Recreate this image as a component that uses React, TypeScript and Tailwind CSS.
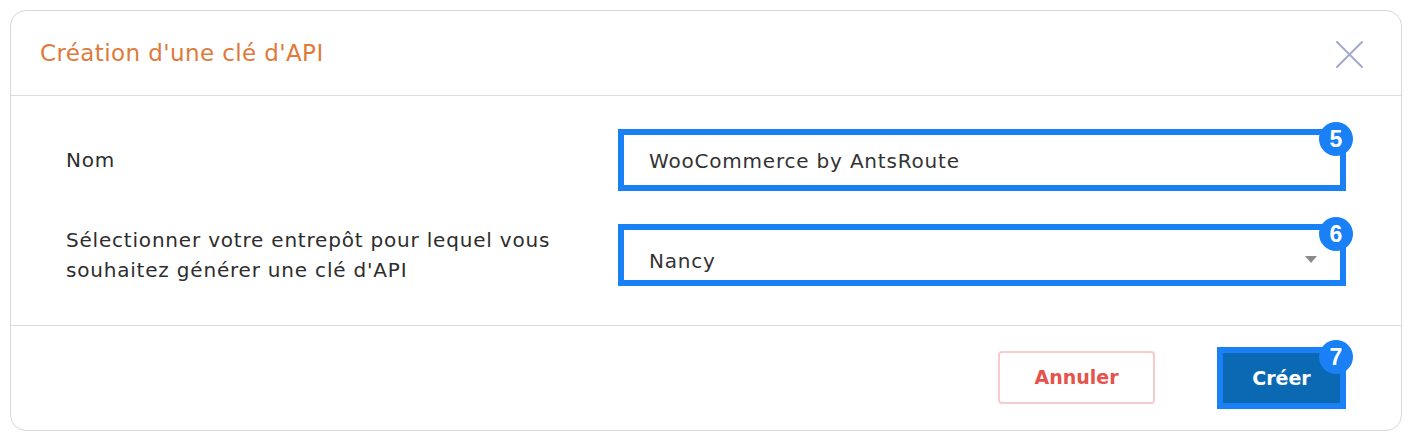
function Badge({ n }: { n: number }) {
  return (
    <span className="absolute -top-[13px] -right-[13px] flex size-[34px] items-center justify-center rounded-full bg-[#1a80f5] font-['Liberation_Sans',sans-serif] text-[23px] font-bold leading-none tracking-normal text-white">
      {n}
    </span>
  )
}

export default function App() {
  return (
    <div className="min-h-screen bg-white p-[10px] font-['DejaVu_Sans',sans-serif]">
      <div className="flex h-[421px] w-[1392px] flex-col rounded-2xl border border-[#d9d9d9] bg-white">
        <header className="flex h-[85px] shrink-0 items-center justify-between border-b border-[#dcdcdc] pr-[38px] pl-[29px]">
          <h1 className="text-[23px] tracking-[0.4px] text-[#e07a3b]">Création d'une clé d'API</h1>
          <svg width="27" height="27" viewBox="0 0 27 27" className="mt-[2px]">
            <path d="M1 1l25 25M26 1L1 26" stroke="#a3aacb" strokeWidth="2" strokeLinecap="round" />
          </svg>
        </header>

        <div className="flex flex-col gap-[33px] border-b border-[#dcdcdc] px-[55px] pt-[33px] pb-[39px] text-[20px] tracking-[0.8px]">
          <div className="flex items-center">
            <label className="w-[552px] shrink-0 text-[#2d2d2d]">Nom</label>
            <div className="relative flex h-[62px] flex-1 items-center border-[6px] border-[#1a80f5] bg-white pt-[2px] pl-[25px] text-[#333]">
              WooCommerce by AntsRoute
              <Badge n={5} />
            </div>
          </div>
          <div className="flex items-center">
            <label className="w-[552px] shrink-0 pr-[40px] leading-[30px] text-[#2d2d2d]">
              Sélectionner votre entrepôt pour lequel vous souhaitez générer une clé d'API
            </label>
            <div className="relative flex h-[62px] flex-1 items-center justify-between border-[6px] border-[#1a80f5] bg-white pt-[12px] pr-[23px] pl-[25px] text-[#333]">
              Nancy
              <svg width="12" height="8" viewBox="0 0 12 8" className="-mt-[3px]">
                <path d="M0 0h12L6 7z" fill="#8a8a8a" />
              </svg>
              <Badge n={6} />
            </div>
          </div>
        </div>

        <footer className="flex flex-1 items-center justify-end gap-[62px] px-[55px] pb-[2px]">
          <button className="h-[53px] w-[157px] rounded-[4px] border-2 border-[#f7cccc] bg-white text-[19px] font-bold text-[#e5534b]">
            Annuler
          </button>
          <button className="relative mt-[2px] h-[62px] w-[129px] border-[6px] border-[#1a80f5] bg-[#0b68b3] text-[19px] font-bold text-white">
            Créer
            <Badge n={7} />
          </button>
        </footer>
      </div>
    </div>
  )
}
